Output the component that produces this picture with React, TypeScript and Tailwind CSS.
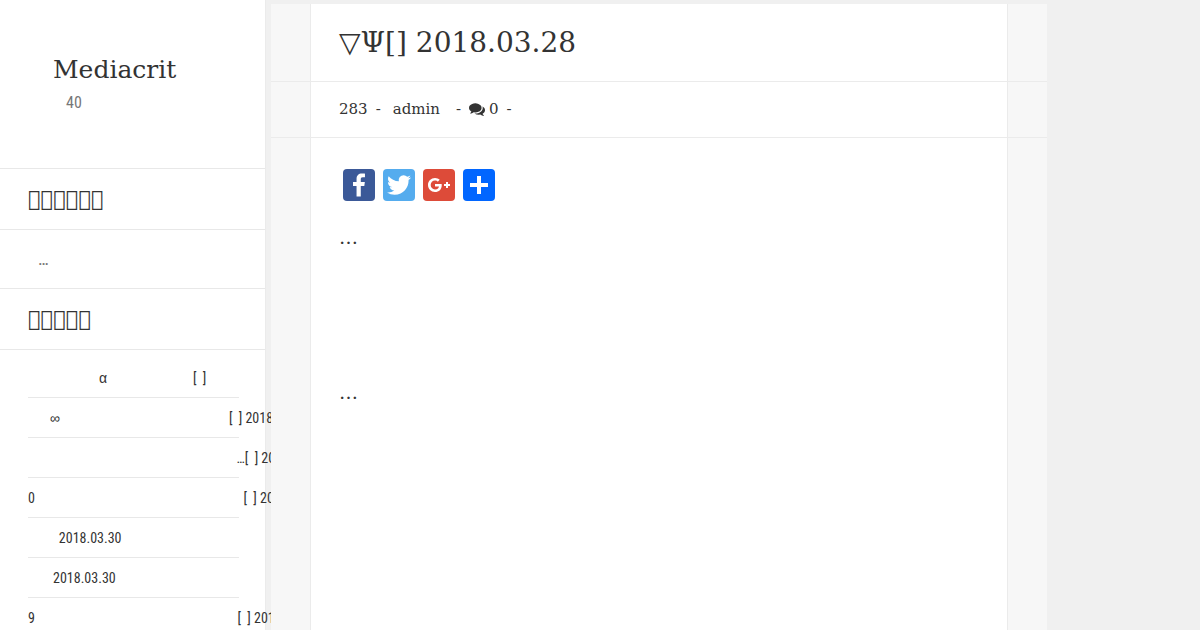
type Post = { lead: string; symbol?: string; gap?: string; tail: string };

// Blank runs in the titles are em / en spaces
const posts: Post[] = [
  { lead: "\u2003\u2003\u2003\u2003\u2003   ", symbol: "α", gap: "\u2003\u2003\u2003\u2003\u2003\u2003\u2003", tail: "[\u2002]" },
  { lead: "\u2003\u2002 ", symbol: "∞", gap: "\u2003\u2003\u2003\u2003\u2003\u2003\u2003\u2003\u2003\u2003\u2003\u2003\u2003   ", tail: "[\u2002] 2018.03.30" },
  { lead: "\u2003\u2003\u2003\u2003\u2003\u2003\u2003\u2003\u2003\u2003\u2003\u2003\u2003\u2003\u2003\u2003\u2003", tail: "…[\u2002] 2018.03.30" },
  { lead: "0\u2003\u2003\u2003\u2003\u2003\u2003\u2003\u2003\u2003\u2003\u2003\u2003\u2003\u2003\u2003\u2003\u2003", tail: "[\u2002] 2018.03.30" },
  { lead: "\u2003\u2003\u2002", tail: "2018.03.30" },
  { lead: "\u2003\u2002\u2005 ", tail: "2018.03.30" },
  { lead: "9\u2003\u2003\u2003\u2003\u2003\u2003\u2003\u2003\u2003\u2003\u2003\u2003\u2003\u2003\u2003\u2003\u2002", tail: "[\u2002] 2018.03.30" },
];

const shares = [
  {
    name: "Facebook",
    bg: "bg-[#3b5998]",
    path: "M17.78 27.5V17.008h3.522l.527-4.09h-4.05v-2.61c0-1.182.33-1.99 2.023-1.99h2.166V4.66c-.375-.05-1.66-.16-3.155-.16-3.123 0-5.26 1.905-5.26 5.405v3.016h-3.53v4.09h3.53V27.5h4.223z",
  },
  {
    name: "Twitter",
    bg: "bg-[#55acee]",
    path: "M28 8.557a9.913 9.913 0 0 1-2.828.775 4.93 4.93 0 0 0 2.166-2.725 9.738 9.738 0 0 1-3.13 1.194 4.92 4.92 0 0 0-3.593-1.55 4.924 4.924 0 0 0-4.794 6.049c-4.09-.21-7.72-2.17-10.15-5.15a4.942 4.942 0 0 0-.665 2.477c0 1.71.87 3.214 2.19 4.1a4.968 4.968 0 0 1-2.23-.616v.06c0 2.39 1.7 4.38 3.952 4.83-.414.115-.85.174-1.297.174-.318 0-.626-.03-.928-.086a4.935 4.935 0 0 0 4.6 3.42 9.893 9.893 0 0 1-6.114 2.107c-.398 0-.79-.023-1.175-.068a13.953 13.953 0 0 0 7.55 2.213c9.056 0 14.01-7.507 14.01-14.013 0-.213-.005-.426-.015-.637.96-.695 1.795-1.56 2.455-2.55z",
  },
  {
    name: "Google+",
    bg: "bg-[#dd4b39]",
    path: "M27 15h-2v-2h-2v2h-2v2h2v2h2v-2h2m-15-2v2.4h3.97c-.16 1.03-1.2 3.02-3.97 3.02-2.39 0-4.34-1.98-4.34-4.42s1.95-4.42 4.34-4.42c1.36 0 2.27.58 2.79 1.08l1.9-1.83C15.47 9.69 13.89 9 12 9c-3.87 0-7 3.13-7 7s3.13 7 7 7c4.04 0 6.72-2.84 6.72-6.84 0-.46-.05-.81-.11-1.16H12z",
  },
  {
    name: "Share",
    bg: "bg-[#0166ff]",
    path: "M14 7h4v18h-4z M7 14h18v4H7z",
  },
];

function SideHeading({ children }: { children: string }) {
  return (
    <h2 className="border-b border-[#e8e8e8] px-7 py-4 font-['DejaVu_Serif',serif] text-[21px] leading-7">
      {children}
    </h2>
  );
}

function Sidebar() {
  return (
    <div className="w-[271px] shrink-0 overflow-hidden">
      <aside className="mr-[5px] min-h-screen border-r border-[#ebebeb] bg-white font-['Roboto_Condensed','Liberation_Sans_Narrow',sans-serif]">
        <header className="border-b border-[#e8e8e8] pt-[50px] pb-[52px]">
          <h1 className="pl-[53px] font-['DejaVu_Serif',serif] text-[25px] leading-10">
            <a href="#">Mediacrit</a>
          </h1>
          <p className="pl-[66px] text-[16px] leading-[26px] text-[#777]">40</p>
        </header>

        <section>
          <SideHeading>{"\ue000\ue000\ue000\ue000\ue000\ue000"}</SideHeading>
          <p className="border-b border-[#e8e8e8] px-[38px] py-4 text-[18px] leading-[26px] text-[#777]">…</p>
        </section>

        <section>
          <SideHeading>{"\ue000\ue000\ue000\ue000\ue000"}</SideHeading>
          <ul className="pt-2 pr-[26px] pl-7">
            {posts.map((post, i) => (
              <li key={i} className="border-b border-[#e8e8e8] pt-[9px] pb-[7px] text-[14px] leading-[23px]">
                <a href="#" className="whitespace-pre">
                  {post.lead}
                  {post.symbol && (
                    <span className="font-['Liberation_Sans',sans-serif] leading-none">{post.symbol}</span>
                  )}
                  {post.gap}
                  {post.tail}
                </a>
              </li>
            ))}
          </ul>
        </section>
      </aside>
    </div>
  );
}

export default function App() {
  return (
    <div className="flex h-screen overflow-hidden bg-[#f0f0f0] font-['DejaVu_Serif',serif] text-[#333]">
      <Sidebar />

      <main className="mt-1 max-w-[776px] flex-1 bg-[#f7f7f7]">
        <div className="border-b border-[#ebebeb] px-[39px]">
          <h1 className="border-x border-[#ebebeb] bg-white px-7 py-[18px] text-[28px] leading-[41px]">
            ▽Ψ[] 2018.03.28
          </h1>
        </div>

        <div className="border-b border-[#ebebeb] px-[39px]">
          <div className="flex items-center border-x border-[#ebebeb] bg-white px-7 py-4 text-[15px] leading-[23px]">
            <span className="mr-2">283</span>
            <span className="mr-3">-</span>
            <a href="#" className="mr-4">admin</a>
            <span className="mr-2">-</span>
            {/* Font Awesome 4 comments glyph */}
            <svg viewBox="0 110 1792 1792" className="mr-1 h-4 w-4 fill-current" aria-hidden="true">
              <path d="M1408 768q0 139-94 257t-256.500 186.500-353.500 68.500q-86 0-176-16-124 88-278 128-36 9-86 16h-3q-11 0-20.500-8t-11.500-21q-1-3-1-6.500t.5-6.500 2-6l2.500-5 3.500-5.500 4-5 4.500-5 4-4.500q5-6 23-25t26-29.500 22.500-29 25-38.500 20.500-44q-124-72-195-177t-71-224q0-139 94-257t256.500-186.500 353.500-68.500 353.500 68.500 256.500 186.500 94 257zm384 256q0 120-71 224.500t-195 176.500q10 24 20.500 44t25 38.500 22.500 29 26 29.500 23 25q1 1 4 4.500t4.500 5 4 5 3.500 5.500l2.500 5 2 6 .5 6.500-1 6.500q-3 14-13 22t-22 7q-50-7-86-16-154-40-278-128-90 16-176 16-271 0-472-132 58 4 88 4 161 0 309-45t264-129q125-92 192-212t67-254q0-77-23-152 129 71 204 178t75 230z" />
            </svg>
            <a href="#" className="mr-2">0</a>
            <span>-</span>
          </div>
        </div>

        <div className="px-[39px]">
          <article className="min-h-screen border-x border-[#ebebeb] bg-white px-7 pt-[31px]">
            <div className="mb-[21px] flex gap-2 px-1">
              {shares.map((s) => (
                <a key={s.name} href="#" aria-label={s.name} className={`h-8 w-8 rounded ${s.bg}`}>
                  <svg viewBox="0 0 32 32" className="h-8 w-8 fill-white">
                    <path d={s.path} />
                  </svg>
                </a>
              ))}
            </div>
            <p className="mb-[124px] text-[19px] leading-[31px]">…</p>
            <p className="text-[19px] leading-[31px]">…</p>
          </article>
        </div>
      </main>
    </div>
  );
}
